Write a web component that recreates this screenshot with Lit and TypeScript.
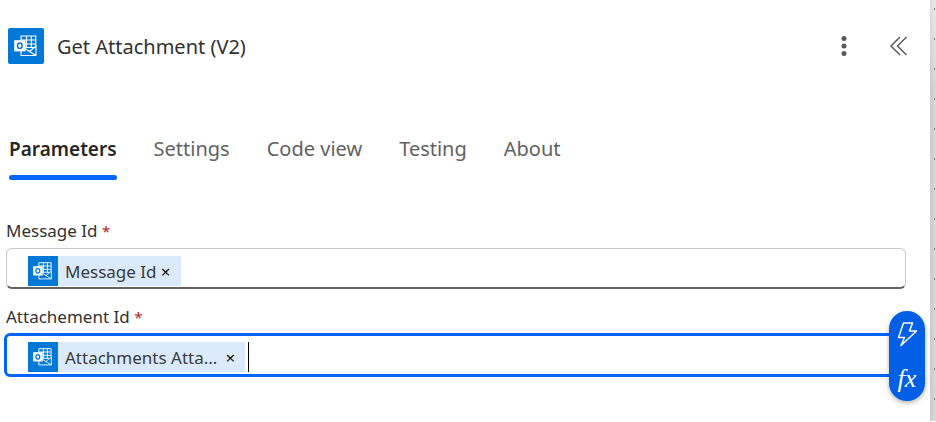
import { LitElement, html, css } from "lit";
import { customElement } from "lit/decorators.js";
import { classMap } from "lit/directives/class-map.js";

@customElement("outlook-icon")
class OutlookIcon extends LitElement {
  static styles = css`
    :host {
      display: block;
      flex: none;
      background: #0078d7;
    }
    svg {
      display: block;
      width: 100%;
      height: 100%;
    }
  `;

  render() {
    return html`<svg viewBox="0 0 36 36" fill="none" stroke="#fff" stroke-width="1.1" aria-hidden="true">
      <path d="M13 18V8H27.800V18M13 12H27.800M17 16H27.800M18.500 8V19.500M23.300 8V19.500M17 19.500H26" />
      <path d="M17 20.500L21.500 23.500L28 18V27.500H13V23M21.500 23.500L28 27.500" />
      <rect x="6.200" y="12.200" width="11.400" height="11.200" fill="#fff" stroke="none" />
      <ellipse cx="11.800" cy="17.800" rx="2.300" ry="2.700" stroke="#0078d7" stroke-width="1.500" />
    </svg>`;
  }
}

@customElement("token-field")
class TokenField extends LitElement {
  static properties = {
    label: {},
    token: {},
    active: { type: Boolean },
    truncated: { type: Boolean },
  };
  declare label: string;
  declare token: string;
  declare active: boolean;
  declare truncated: boolean;

  static styles = css`
    :host {
      display: block;
    }
    .label {
      display: block;
      padding-left: 2px;
      font-size: 17px;
      line-height: 24px;
      color: #323130;
    }
    .star {
      font-size: 15px;
      line-height: 20px;
      color: #b3202c;
    }
    .box {
      box-sizing: border-box;
      display: flex;
      align-items: center;
      height: 41px;
      margin: 5px 0 0 2px;
      padding: 5px 0 0 21px;
      border: 1px solid #c8c8c8;
      border-bottom: 2px solid #616161;
      border-radius: 6px;
      background: #fff;
    }
    .box.active {
      height: 44px;
      margin: 4px 0 0;
      padding: 4px 0 0 21px;
      border: 3px solid #0364ff;
    }
    .chip {
      display: flex;
      align-items: center;
      height: 30px;
      padding-right: 6px;
      background: #daeafa;
      color: #3b3a39;
      font-size: 17px;
      line-height: 28px;
      white-space: nowrap;
    }
    .name {
      padding-top: 2px;
    }
    .truncated .name {
      padding-right: 4px;
    }
    outlook-icon {
      width: 30px;
      height: 30px;
      margin-right: 7px;
    }
    .remove {
      width: 18px;
      height: 30px;
      padding: 2px 0 0;
      border: 0;
      background: none;
      color: #111;
      font: 17px/28px "Noto Sans", sans-serif;
    }
    .caret {
      width: 1px;
      height: 30px;
      margin-left: 3px;
      background: #000;
    }
    .entry {
      flex: 1;
      min-width: 0;
      height: 28px;
      padding: 0;
      border: 0;
      outline: 0;
      background: none;
      font: inherit;
    }
  `;

  render() {
    return html`
      <label class="label" for="entry">${this.label} <span class="star">*</span></label>
      <div class=${classMap({ box: true, active: !!this.active })}>
        <span class=${classMap({ chip: true, truncated: !!this.truncated })}>
          <outlook-icon></outlook-icon>
          <span class="name">${this.token}</span>
          <button class="remove" aria-label="Remove ${this.token}">×</button>
        </span>
        ${this.active ? html`<span class="caret"></span>` : ""}
        <input class="entry" id="entry" type="text" />
      </div>
    `;
  }
}

@customElement("app-root")
class AppRoot extends LitElement {
  static properties = { tab: { state: true } };
  declare tab: string;

  constructor() {
    super();
    this.tab = "Parameters";
  }

  static styles = css`
    :host {
      display: flex;
      min-height: 421px;
      background: #fff;
      font-family: "Noto Sans", "Open Sans", sans-serif;
      color: #323130;
    }
    .panel {
      flex: 1;
      min-width: 0;
    }
    .canvas {
      flex: none;
      width: 6px;
      background:
        linear-gradient(#777 0 2px, transparent 2px) 4px 8px / 1px 30px repeat-y,
        linear-gradient(rgba(255, 255, 255, 0.4), transparent 90px),
        linear-gradient(90deg, #cacaca, #dadada);
    }
    .header {
      display: flex;
      align-items: center;
      padding: 28px 21px 0 8px;
    }
    .logo {
      width: 36px;
      height: 36px;
      border-radius: 2px;
      margin-right: 13px;
    }
    h1 {
      flex: 1;
      margin: 0;
      padding-top: 2px;
      font-size: 20px;
      font-weight: 400;
      line-height: 34px;
    }
    .icon-button {
      display: block;
      padding: 0;
      border: 0;
      background: none;
      color: #5a5a5a;
    }
    .icon-button svg {
      display: block;
    }
    .collapse {
      margin-left: 41px;
    }
    .tabs {
      display: flex;
      gap: 37px;
      padding: 68px 9px 0;
    }
    .tab {
      padding: 0;
      border: 0;
      background: none;
      font: 20px/32px "Noto Sans", sans-serif;
      color: #616161;
    }
    .tab span {
      display: block;
      padding: 1px 0 10px;
    }
    .tab::after {
      content: "";
      display: block;
      height: 5px;
      border-radius: 3px;
    }
    .tab.selected {
      font-size: 19px;
      font-weight: 600;
      color: #262626;
    }
    .tab.selected::after {
      background: #0364ff;
    }
    .fields {
      display: grid;
      gap: 16px;
      padding: 39px 24px 0 4px;
    }
    .last {
      position: relative;
    }
    .tools {
      position: absolute;
      right: -19px;
      bottom: -24px;
      box-sizing: border-box;
      display: flex;
      flex-direction: column;
      width: 36px;
      height: 90px;
      border-radius: 18px;
      background: #025fe6;
      box-shadow: 0 2px 5px rgba(0, 0, 0, 0.3);
    }
    .tool {
      flex: 1;
      padding: 0;
      border: 0;
      background: none;
      color: #fff;
    }
    .tool svg {
      display: block;
      margin: 0 auto;
    }
    .fx {
      font: italic 26px/36px "Liberation Serif", serif;
    }
  `;

  render() {
    const tabs = ["Parameters", "Settings", "Code view", "Testing", "About"];
    return html`
      <main class="panel">
        <header class="header">
          <outlook-icon class="logo"></outlook-icon>
          <h1>Get Attachment (V2)</h1>
          <button class="icon-button" aria-label="More options">
            <svg width="8" height="22" viewBox="0 0 8 22" fill="currentColor">
              <circle cx="4" cy="3.500" r="2.500" />
              <circle cx="4" cy="11" r="2.500" />
              <circle cx="4" cy="18.500" r="2.500" />
            </svg>
          </button>
          <button class="icon-button collapse" aria-label="Collapse">
            <svg width="20" height="20" viewBox="0 0 20 20" fill="none" stroke="currentColor" stroke-width="1.500">
              <path d="M11 1L2 10L11 19M17.500 1L8.500 10L17.500 19" />
            </svg>
          </button>
        </header>
        <nav class="tabs" role="tablist">
          ${tabs.map(
            (t) => html`<button
              role="tab"
              aria-selected=${t === this.tab}
              class=${classMap({ tab: true, selected: t === this.tab })}
              @click=${() => (this.tab = t)}
            ><span>${t}</span></button>`
          )}
        </nav>
        <section class="fields">
          <token-field label="Message Id" token="Message Id"></token-field>
          <div class="last">
            <token-field label="Attachement Id" token="Attachments Atta..." active truncated></token-field>
            <div class="tools">
              <button class="tool" aria-label="Insert dynamic content">
                <svg width="24" height="28" viewBox="0 0 24 28" fill="none" stroke="#fff" stroke-width="1.500" stroke-linejoin="round">
                  <path d="M8.500 3H17.500L14.500 11H21.500L6 25.500L9.500 17.500H3.500Z" />
                </svg>
              </button>
              <button class="tool fx" aria-label="Insert expression">fx</button>
            </div>
          </div>
        </section>
      </main>
      <aside class="canvas"></aside>
    `;
  }
}
